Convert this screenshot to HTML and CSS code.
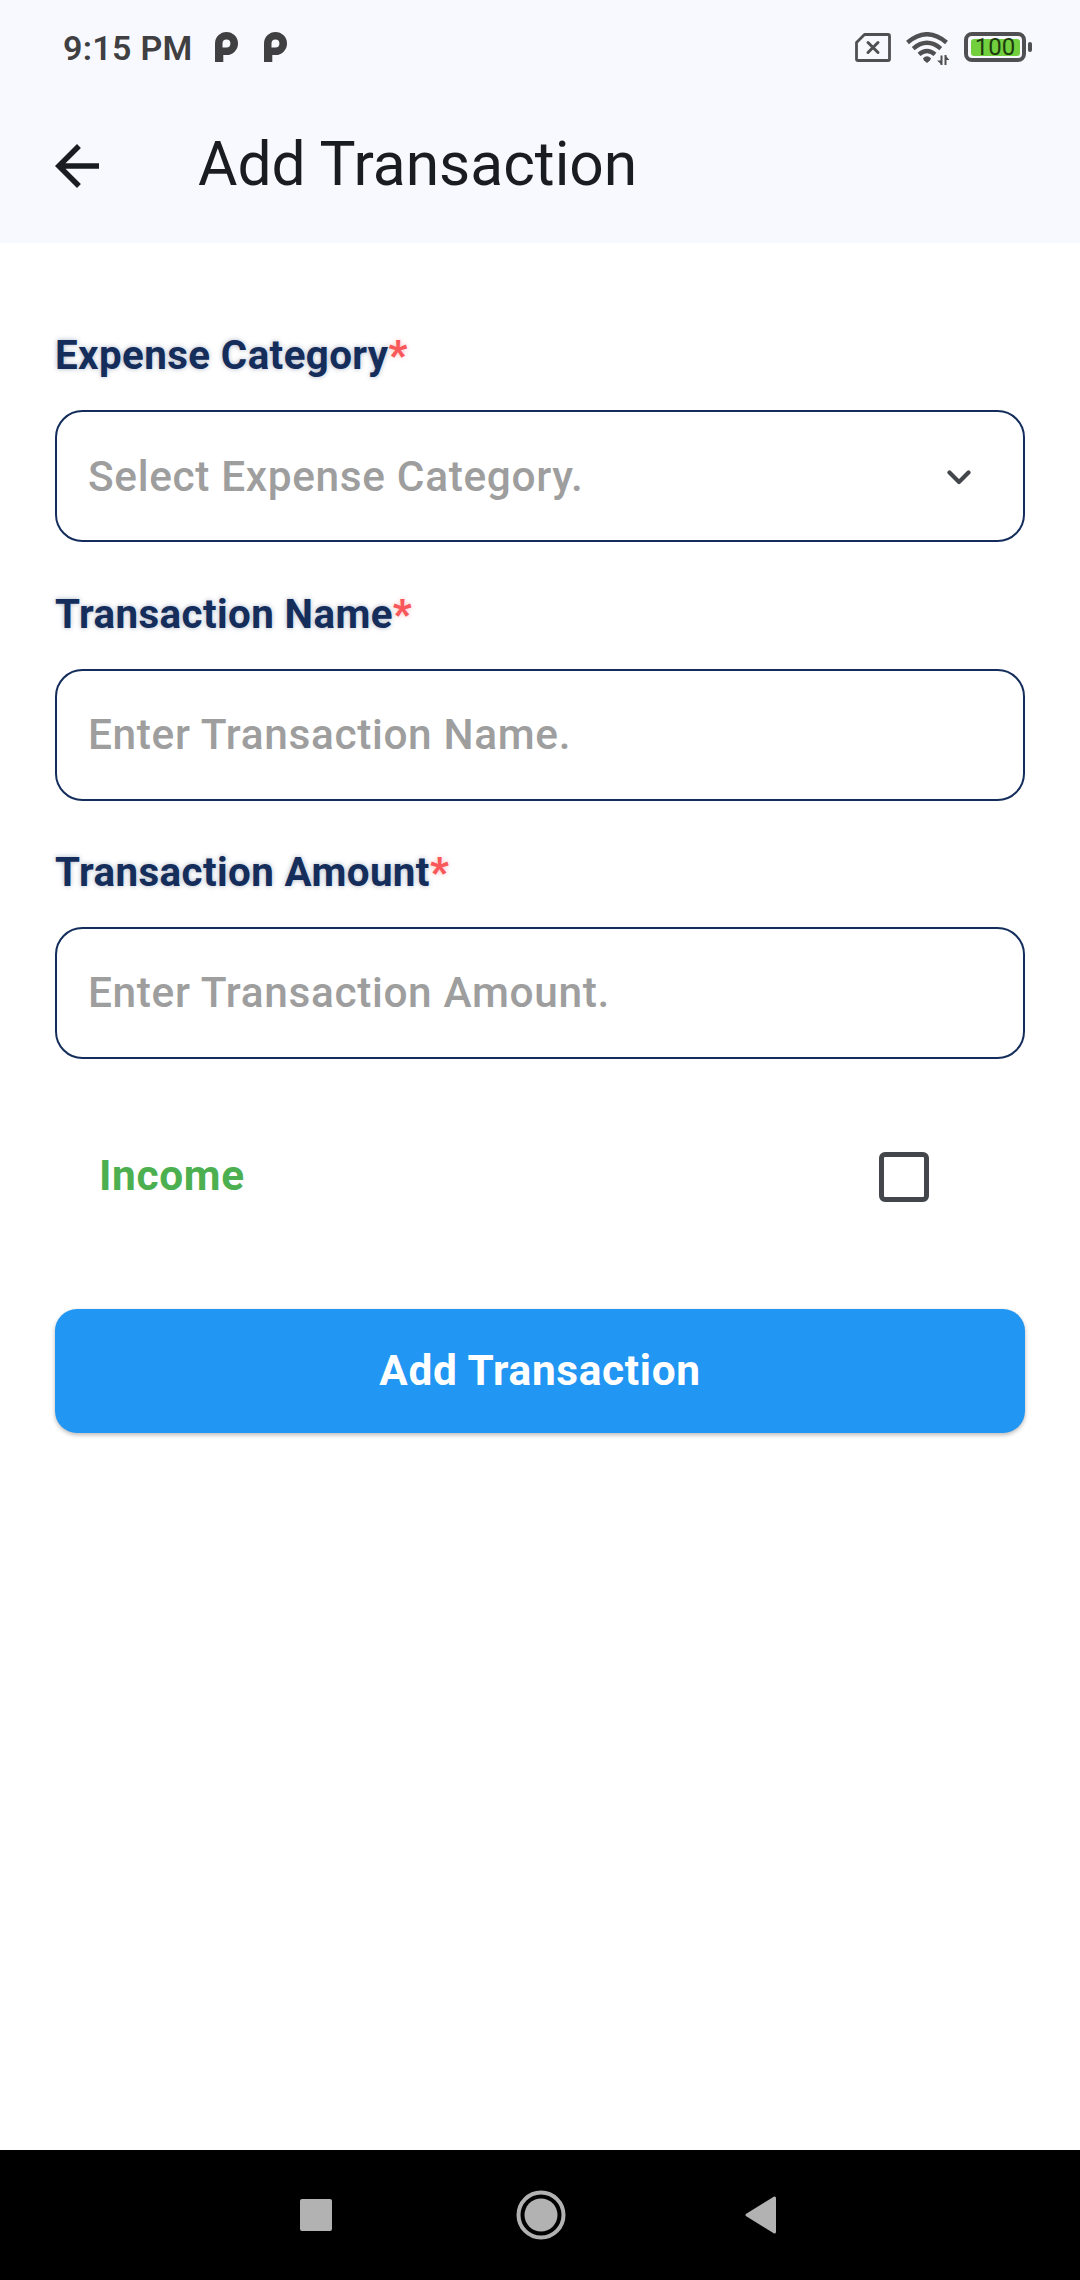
FILE: index.html
```html
<!DOCTYPE html>
<html lang="en">
<head>
<meta charset="utf-8">
<title>Add Transaction</title>
<link rel="stylesheet" href="styles.css">
</head>
<body>
<div class="screen">
  <div class="status-bar">
    <span class="clock">9:15 PM</span>
    <svg class="notif" width="23" height="30" viewBox="0 0 23 30"><path fill="#404042" fill-rule="evenodd" d="M0 30V11.5a11.5 11.5 0 1 1 11.5 11.5H8.3V30zM11.5 7.6a4 4 0 0 0-4 4v3.8h4a3.9 3.9 0 0 0 0-7.8z"/></svg>
    <svg class="notif second" width="23" height="30" viewBox="0 0 23 30"><path fill="#404042" fill-rule="evenodd" d="M0 30V11.5a11.5 11.5 0 1 1 11.5 11.5H8.3V30zM11.5 7.6a4 4 0 0 0-4 4v3.8h4a3.9 3.9 0 0 0 0-7.8z"/></svg>
    <svg class="sim" width="36" height="29" viewBox="0 0 36 29" fill="none" stroke="#505053" stroke-linejoin="round" stroke-linecap="round"><path stroke-width="2.8" d="M9.5 1.5H33a1.500 1.500 0 0 1 1.500 1.500V26a1.500 1.500 0 0 1-1.500 1.500H3A1.500 1.500 0 0 1 1.500 26V9.500z"/><path stroke-width="3" d="M13 9.500l10 10M23 9.500l-10 10"/></svg>
    <svg class="wifi" width="44" height="34" viewBox="0 0 44 34" fill="none" stroke="#505053"><path stroke-width="4.400" d="M1.500 10.500Q21 -6 40.500 10.500M7.200 16.600Q21 5 34.800 16.600M13 22.400Q21 15.500 29 22.400"/><path fill="#505053" stroke="none" d="M17 26.200q4-3.800 8 0l-1 2.200-3 2.500-3-2.500z"/><path stroke-width="2" d="M35.500 33V23.500M39.500 23v10"/><path fill="#505053" stroke="none" d="M31 28.500h5V33zM39 23v5h4.500z"/></svg>
    <span class="battery"><span class="battery-level">100</span></span>
    <span class="battery-tip"></span>
  </div>
  <header class="app-bar">
    <svg width="66" height="66" viewBox="0 0 24 24" fill="#191c20"><path d="M20 11H7.830l5.590-5.590L12 4l-8 8 8 8 1.410-1.410L7.830 13H20v-2z"/></svg>
    <h1 class="title">Add Transaction</h1>
  </header>
  <main class="form">
    <div class="label">Expense Category<span class="star">*</span></div>
    <div class="field"><span>Select Expense Category.</span>
      <svg class="chevron" width="24" height="15" viewBox="0 0 24 15" fill="none" stroke="#43474c" stroke-width="4.200" stroke-linecap="round" stroke-linejoin="round"><path d="M2.500 2.500L12 12l9.500-9.500"/></svg>
    </div>
    <div class="label">Transaction Name<span class="star">*</span></div>
    <div class="field"><span>Enter Transaction Name.</span></div>
    <div class="label">Transaction Amount<span class="star">*</span></div>
    <div class="field last"><span>Enter Transaction Amount.</span></div>
    <div class="income"><span class="income-label">Income</span><span class="checkbox"></span></div>
    <div class="submit">Add Transaction</div>
  </main>
  <nav class="nav-bar">
    <svg width="32" height="32"><rect width="32" height="32" rx="2" fill="#b2b2b2"/></svg>
    <svg class="home" width="50" height="50" viewBox="0 0 50 50"><circle cx="25" cy="25" r="22.500" fill="none" stroke="#b2b2b2" stroke-width="4"/><circle cx="25" cy="25" r="16.500" fill="#b2b2b2"/></svg>
    <svg width="32" height="38" viewBox="0 0 32 38"><path fill="#b2b2b2" stroke="#b2b2b2" stroke-width="3" stroke-linejoin="round" d="M2 19L29.500 2v34z"/></svg>
  </nav>
</div>
</body>
</html>
```
FILE: styles.css
```css
* { box-sizing: border-box; }
body { margin: 0; background: #fff; font-family: Roboto, sans-serif; }
svg { display: block; flex: none; }
.screen { width: 1080px; height: 2280px; display: flex; flex-direction: column; }

.status-bar { height: 94px; background: #f8f9ff; display: flex; align-items: center; padding: 0 48px 0 63px; }
.clock { font-size: 34px; font-weight: 600; line-height: 40px; letter-spacing: 0.3px; color: #404042; width: 152px; margin-top: 1px; white-space: nowrap; }
.notif { margin-right: 26px; }
.second { margin-right: auto; }
.sim { margin-right: 15px; }
.wifi { margin-right: 14px; margin-top: 4px; }
.battery { width: 62px; height: 30px; border: 4.500px solid #505053; border-radius: 8px; padding: 2.500px; }
.battery-level { display: flex; align-items: center; justify-content: center; height: 100%; background: #72d03f; border-radius: 3px; font-size: 24px; font-weight: 400; line-height: 16px; color: #1d3a10; }
.battery-tip { width: 4px; height: 10px; margin-left: 2px; border-radius: 2px; background: #505053; }

.app-bar { height: 149px; background: #f8f9ff; display: flex; align-items: center; padding: 0 44px 5px; gap: 88px; }
.title { margin: 0 0 2px; font-size: 60.500px; font-weight: 400; line-height: 72px; color: #191c20; white-space: nowrap; }

.form { flex: 1; padding: 89px 55px 0; }
.label { height: 48px; line-height: 48px; font-size: 40.300px; letter-spacing: 0.400px; font-weight: 700; color: #142d5b; margin-bottom: 30px; text-shadow: 0 0 5px rgba(20, 45, 91, 0.350); white-space: nowrap; }
.star { color: #f95759; font-weight: 900; text-shadow: 0 0 5px rgba(249, 87, 89, 0.350); }
.field { height: 132px; border: 2px solid #142d5b; border-radius: 27.500px; margin-bottom: 48.500px; padding: 0 52px 0 31px; display: flex; align-items: center; justify-content: space-between; font-size: 42.400px; letter-spacing: 0.650px; font-weight: 500; color: #9e9e9e; white-space: nowrap; }
.last { padding-bottom: 2px; }
.chevron { margin-top: 2px; }
.income { display: flex; align-items: center; justify-content: space-between; height: 50px; margin-top: 93px; padding: 0 96px 0 44px; font-size: 42.400px; letter-spacing: 0.650px; font-weight: 700; color: #4caf50; }
.income-label { margin-bottom: 3px; }
.checkbox { width: 50px; height: 50px; border: 5.500px solid #43474c; border-radius: 6px; }
.submit { height: 124px; margin-top: 107px; padding-bottom: 2px; border-radius: 22px; background: #2196f3; color: #fff; font-size: 42.400px; letter-spacing: 0.650px; font-weight: 700; display: flex; align-items: center; justify-content: center; box-shadow: 0 2px 4px rgba(0, 0, 0, 0.280); }

.nav-bar { height: 130px; background: #000; display: flex; align-items: center; justify-content: space-between; padding: 0 303px 0 300px; }
.home { margin-left: 4px; }
```
